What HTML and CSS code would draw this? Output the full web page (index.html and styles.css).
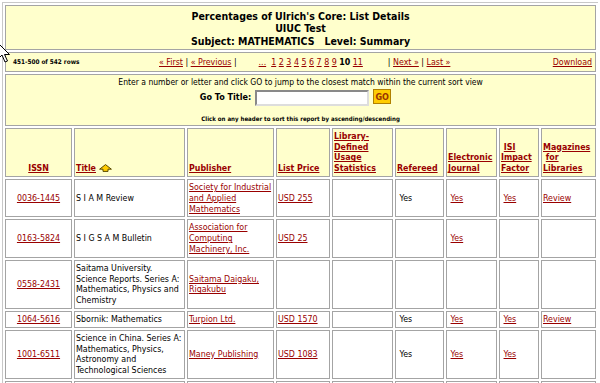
FILE: index.html
```html
<!DOCTYPE html>
<html lang="en">
<head>
    <meta charset="UTF-8">
    <title>Percentages of Ulrich's Core: List Details</title>
    <link rel="stylesheet" href="styles.css">
</head>
<body>

<table class="report">
    <colgroup>
        <col class="c-issn">
        <col class="c-title">
        <col class="c-pub">
        <col class="c-price">
        <col class="c-usage">
        <col class="c-ref">
        <col class="c-ej">
        <col class="c-isi">
        <col class="c-mag">
    </colgroup>
    <tr>
        <td colspan="9" class="banner">
            Percentages of Ulrich's Core: List Details<br>
            UIUC Test<br>
            Subject: MATHEMATICS &nbsp; Level: Summary
        </td>
    </tr>
    <tr>
        <td colspan="9" class="nav">
            <div class="nav-bar">
                <span class="rows">451-500 of 542 rows</span>
                <span><a href="#">&laquo; First</a> | <a href="#">&laquo; Previous</a> |</span>
                <span class="pages">
                    <a href="#">...</a>&nbsp;
                    <a href="#">1</a> <a href="#">2</a> <a href="#">3</a> <a href="#">4</a> <a href="#">5</a>
                    <a href="#">6</a> <a href="#">7</a> <a href="#">8</a> <a href="#">9</a> <b>10</b> <a href="#">11</a>
                </span>
                <span>| <a href="#">Next &raquo;</a> | <a href="#">Last &raquo;</a></span>
                <a href="#" class="download">Download</a>
            </div>
        </td>
    </tr>
    <tr>
        <td colspan="9" class="goto">
            <div class="goto-line">Enter a number or letter and click GO to jump to the closest match within the current sort view</div>
            <form class="goto-form">
                <label for="gotoTitle">Go To Title:</label>
                <input type="text" id="gotoTitle">
                <button type="button" class="go-btn">GO</button>
            </form>
            <div class="hint">Click on any header to sort this report by ascending/descending</div>
        </td>
    </tr>
    <tr class="head">
        <th class="center"><a href="#">ISSN</a></th>
        <th><a href="#">Title</a> <svg class="sort-arrow" width="13" height="8" viewBox="0 0 13 8"><path d="M6.5 0.6 L12.4 5.2 L9 5.2 L9 7.4 L4 7.4 L4 5.2 L0.6 5.2 Z" fill="#ffcc00" stroke="#5a4a00" stroke-width="1" stroke-linejoin="round"/></svg></th>
        <th><a href="#">Publisher</a></th>
        <th><a href="#">List Price</a></th>
        <th><a href="#">Library-Defined Usage Statistics</a></th>
        <th><a href="#">Refereed</a></th>
        <th><a href="#">Electronic Journal</a></th>
        <th>&nbsp;<a href="#">ISI Impact Factor</a></th>
        <th><a href="#">Magazines</a><br>&nbsp;<a href="#">for</a><br><a href="#">Libraries</a></th>
    </tr>
    <tr>
        <td class="center"><a href="#">0036-1445</a></td>
        <td>S I A M Review</td>
        <td><a href="#">Society for Industrial and Applied Mathematics</a></td>
        <td><a href="#">USD 255</a></td>
        <td></td>
        <td>&nbsp;Yes</td>
        <td>&nbsp;<a href="#">Yes</a></td>
        <td>&nbsp;<a href="#">Yes</a></td>
        <td><a href="#">Review</a></td>
    </tr>
    <tr>
        <td class="center"><a href="#">0163-5824</a></td>
        <td>S I G S A M Bulletin</td>
        <td><a href="#">Association for Computing Machinery, Inc.</a></td>
        <td><a href="#">USD 25</a></td>
        <td></td>
        <td></td>
        <td>&nbsp;<a href="#">Yes</a></td>
        <td></td>
        <td></td>
    </tr>
    <tr>
        <td class="center"><a href="#">0558-2431</a></td>
        <td>Saitama University. Science Reports. Series A: Mathematics, Physics and Chemistry</td>
        <td><a href="#">Saitama Daigaku, Rigakubu</a></td>
        <td></td>
        <td></td>
        <td></td>
        <td></td>
        <td></td>
        <td></td>
    </tr>
    <tr>
        <td class="center"><a href="#">1064-5616</a></td>
        <td>Sbornik: Mathematics</td>
        <td><a href="#">Turpion Ltd.</a></td>
        <td><a href="#">USD 1570</a></td>
        <td></td>
        <td>&nbsp;Yes</td>
        <td>&nbsp;<a href="#">Yes</a></td>
        <td>&nbsp;<a href="#">Yes</a></td>
        <td><a href="#">Review</a></td>
    </tr>
    <tr>
        <td class="center"><a href="#">1001-6511</a></td>
        <td>Science in China. Series A: Mathematics, Physics, Astronomy and Technological Sciences</td>
        <td><a href="#">Maney Publishing</a></td>
        <td><a href="#">USD 1083</a></td>
        <td></td>
        <td>&nbsp;Yes</td>
        <td>&nbsp;<a href="#">Yes</a></td>
        <td>&nbsp;<a href="#">Yes</a></td>
        <td></td>
    </tr>
    <tr class="next-row">
        <td></td>
        <td></td>
        <td></td>
        <td></td>
        <td></td>
        <td></td>
        <td></td>
        <td></td>
        <td></td>
    </tr>
</table>

<svg class="cursor" width="14" height="22" viewBox="0 0 14 22"><path d="M1 1 L1 17 L5 13 L8 20 L10.5 19 L7.5 12.5 L12.5 12.5 Z" fill="#fff" stroke="#000" stroke-width="1" stroke-linejoin="round"/></svg>

</body>
</html>
```

FILE: styles.css
```css
body {
    margin: 2px;
    font-family: "DejaVu Sans Condensed", "DejaVu Sans", sans-serif;
    font-stretch: condensed;
    font-size: 8.8px;
    color: #000;
    background: #fff;
}
a {
    color: #990000;
}
.report {
    width: 597px;
    table-layout: fixed;
    border: 1px solid #c8c8c8;
    border-spacing: 2px;
}
.report td, .report th {
    border: 1px solid #a4a4a4;
    padding: 2px 1px;
    line-height: 10.8px;
    text-align: left;
}
.c-issn { width: 67px; }
.c-title { width: 111px; }
.c-pub { width: 87px; }
.c-price { width: 54px; }
.c-usage { width: 61px; }
.c-ref { width: 49px; }
.c-ej { width: 51px; }
.c-isi { width: 40px; }
.c-mag { width: 55px; }

.report .center {
    text-align: center;
}
.report .banner {
    background: #ffffcc;
    text-align: center;
    font-weight: bold;
    font-size: 10.5px;
    line-height: 12.8px;
    padding: 3.5px 2px 1px;
}
.report .nav {
    background: #ffffcc;
    padding: 2px 3px 2px 7px;
    line-height: 14px;
}
.nav-bar {
    display: flex;
    align-items: center;
}
.rows {
    width: 146px;
    font-size: 6.4px;
    font-weight: bold;
}
.pages {
    margin: 0 25px 0 22px;
}
.download {
    margin-left: auto;
}
.report .goto {
    background: #ffffcc;
    text-align: center;
    padding: 2px 1px 1px;
}
.goto-line {
    font-size: 8.5px;
    line-height: 11px;
}
.goto-form {
    margin: 1px 0 0;
    padding-right: 10px;
    height: 17px;
    display: flex;
    justify-content: center;
    align-items: center;
    gap: 4px;
}
.goto-form label {
    font-weight: bold;
    font-size: 9px;
}
.goto-form input {
    box-sizing: border-box;
    width: 114px;
    height: 16px;
    margin: 1px 0 0;
    padding: 0 2px;
    border: 2px inset #ddd;
    background: #fff;
}
.go-btn {
    box-sizing: border-box;
    width: 18px;
    height: 15px;
    margin: -1px 0 0;
    padding: 0;
    border: 1px solid #b08000;
    background: #ffcc00;
    color: #993300;
    font-family: inherit;
    font-size: 9px;
    font-weight: bold;
}
.hint {
    font-size: 6.1px;
    font-weight: bold;
    line-height: 10px;
    margin-top: 8px;
}
.head th {
    background: #ffffcc;
    vertical-align: bottom;
    font-weight: bold;
}
.sort-arrow {
    vertical-align: -1px;
}
.report td {
    vertical-align: middle;
}
.next-row td {
    height: 40px;
}
.cursor {
    position: absolute;
    left: -3px;
    top: 42px;
}
```
